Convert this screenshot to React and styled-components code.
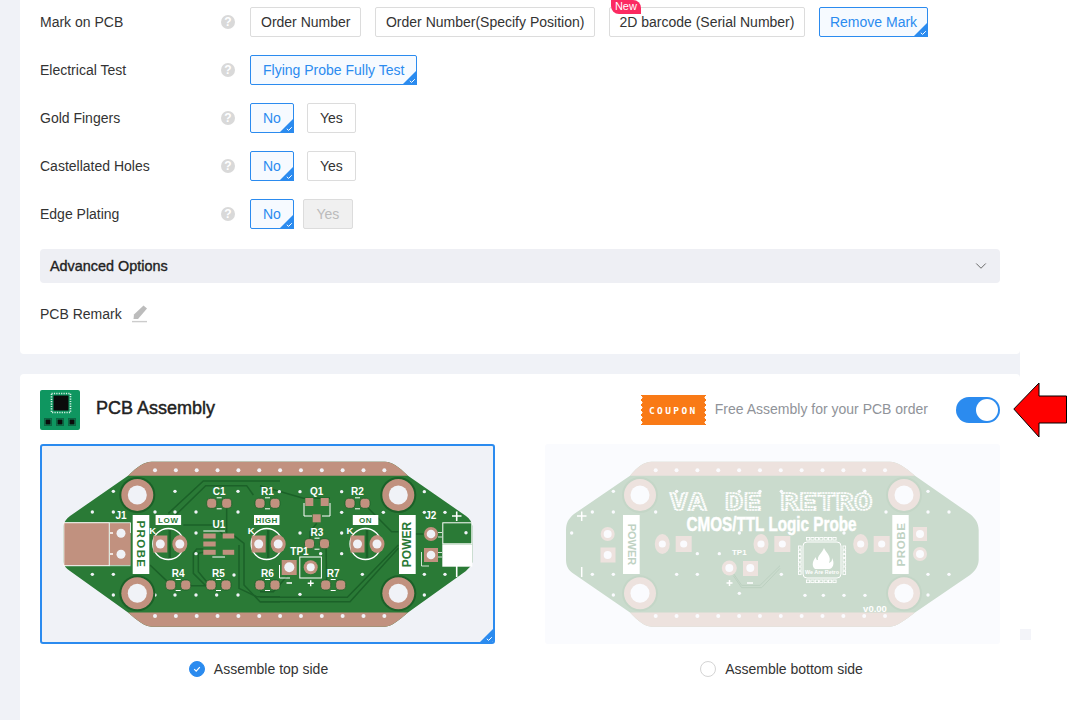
import React from 'react';
import styled, { createGlobalStyle } from 'styled-components';
import { ChevronDown } from 'lucide-react';

const BLUE = '#2b8bef';

const GlobalStyle = createGlobalStyle`
  html, body {
    margin: 0;
    background: #fff;
    overflow: hidden;
  }
  * {
    box-sizing: border-box;
  }
`;

const rows = [
  {
    label: 'Mark on PCB',
    options: [
      { text: 'Order Number', pad: 10 },
      { text: 'Order Number(Specify Position)', pad: 9.5 },
      { text: '2D barcode (Serial Number)', pad: 9.5, isNew: true },
      { text: 'Remove Mark', pad: 10, selected: true },
    ],
  },
  { label: 'Electrical Test', options: [{ text: 'Flying Probe Fully Test', pad: 12, selected: true }] },
  { label: 'Gold Fingers', options: [{ text: 'No', pad: 12, selected: true }, { text: 'Yes', pad: 12, shift: -1 }] },
  { label: 'Castellated Holes', options: [{ text: 'No', pad: 12, selected: true }, { text: 'Yes', pad: 12, shift: -1 }] },
  { label: 'Edge Plating', options: [{ text: 'No', pad: 12, selected: true }, { text: 'Yes', pad: 12.5, shift: -5, disabled: true }] },
];

// Board drawings use page coordinates; the zoomed crops were read at 3x
const zl = (x, y) => [40 + x / 3, 445 + y / 3];
const zr = (x, y) => [260 + x / 3, 445 + y / 3];
const bl = (x, y) => [540 + x / 3, 445 + y / 3];
const br = (x, y) => [770 + x / 3, 445 + y / 3];
const pts = (map, list) => list.map(([x, y]) => map(x, y).join(',')).join(' ');

const TOP = { green: '#2a7a36', dark: '#1b6128', copper: '#c1917f', hole: '#f0f2f7', silk: '#fff' };
const BOTTOM = { green: '#cadbcd', dark: '#bcd0c0', copper: '#ede2de', hole: '#fafbfe', silk: '#fff' };

const topVias = [
  ...[[157, 201], [220, 201], [220, 139], [345, 201], [405, 139], [405, 201], [468, 201], [594, 139], [594, 201],
    [157, 388], [220, 388], [220, 450], [345, 450], [405, 450], [468, 450], [468, 264], [468, 326], [582, 390], [594, 450], [530, 450]]
    .map(([x, y]) => zl(x, y)),
  ...[[58, 140], [120, 140], [245, 140], [245, 202], [370, 202], [120, 264], [245, 264], [245, 326], [182, 326],
    [120, 448], [307, 388], [493, 140], [493, 202], [555, 202], [493, 388], [555, 388], [493, 450]]
    .map(([x, y]) => zr(x, y)),
];

const bottomVias = [
  ...[[220, 139], [157, 201], [220, 201], [347, 201], [95, 264], [157, 388], [220, 388], [220, 450], [410, 388], [472, 388],
    [472, 326], [538, 326], [598, 445], [598, 264], [598, 139], [660, 139], [410, 139]]
    .map(([x, y]) => bl(x, y)),
  ...[[34, 139], [285, 139], [34, 388], [105, 451], [160, 451], [222, 451], [285, 451], [348, 201], [222, 264],
    [474, 139], [474, 201], [537, 201], [474, 388], [537, 388], [474, 450]]
    .map(([x, y]) => br(x, y)),
];

const stripDots = (start, count) => Array.from({ length: count }, (_, i) => start + i * 20.85);

const Dots = ({ list, fill, r = 1.7 }) => list.map(([x, y]) => <circle key={`${x}-${y}`} cx={x} cy={y} r={r} fill={fill} />);

const Mount = ({ x, y, c }) => (
  <g>
    <circle cx={x} cy={y} r={18} fill={c.dark} />
    <circle cx={x} cy={y} r={16} fill={c.copper} />
    <circle cx={x} cy={y} r={9.5} fill={c.hole} />
  </g>
);

const Silk = ({ x, y, size = 10, fill = '#fff', children, ...rest }) => (
  <text x={x} y={y} fontSize={size} fontWeight="700" fontFamily="'Liberation Sans', sans-serif" textAnchor="middle" fill={fill} {...rest}>
    {children}
  </text>
);

const Resistor = ({ x, y, label, c }) => (
  <g>
    <rect x={x - 5} y={y - 5} width={10} height={10} rx={3.5} fill={c.copper} stroke={c.dark} strokeWidth="0.8" />
    <rect x={x + 10} y={y - 5} width={10} height={10} rx={3.5} fill={c.copper} stroke={c.dark} strokeWidth="0.8" />
    <path d={`M${x + 5} ${y - 5.5}h5M${x + 5} ${y + 5.5}h5`} stroke="#fff" strokeWidth="1" />
    <Silk x={x + 7.5} y={y - 8}>{label}</Silk>
  </g>
);

const Led = ({ cx, y, label, labelWidth = 25.5, c }) => (
  <g>
    <rect x={cx - 12.7} y={y - 29} width={labelWidth} height={10} fill="#fff" />
    <Silk x={cx - 12.7 + labelWidth / 2} y={y - 21} size={8} fill={c.green} letterSpacing="0.6">{label}</Silk>
    <Silk x={cx - 15.5} y={y - 10} size={9.5}>K</Silk>
    <circle cx={cx} cy={y} r={15.5} fill="none" stroke="#fff" strokeWidth="1.3" />
    <rect x={cx - 15} y={y - 8.5} width={14} height={17} fill={c.copper} />
    <ellipse cx={cx + 11.5} cy={y} rx={7.5} ry={9} fill={c.copper} />
    <circle cx={cx - 8} cy={y} r={4.5} fill={c.hole} />
    <circle cx={cx + 11.5} cy={y} r={4.5} fill={c.hole} />
    <path d={`M${cx + 1.5} ${y - 14}v28`} stroke={c.dark} strokeWidth="2.5" />
  </g>
);

const TopBoard = () => {
  const c = TOP;
  return (
    <BoardSvg viewBox="42 446 451 196">
      <path
        d="M151.7 461.7H385C392 462 398 466 408 475.7L466 516C470 519 472 522 472.3 526V562C472 565 470 567 466 571L408 612.6C398 621 392 626.4 385 626.7H151.7C144 626.4 138 621 128 612.6L70 571C66 568 64 566 63.3 562V526C64 522 66 519 70 516L128 475.7C138 466 144 462 151.7 461.7Z"
        fill={c.green}
      />
      <path d="M151.7 461.7H385C392 462 398 466 408 475.7H128C138 466 144 462 151.7 461.7Z" fill={c.copper} />
      <path d="M128 612.6H408C398 621 392 626.4 385 626.7H151.7C144 626.4 138 621 128 612.6Z" fill={c.copper} />
      <Dots list={stripDots(155, 12).flatMap((x) => [[x, 470.3], [x, 616]])} fill={c.hole} r={2} />

      <g fill="none" stroke={c.dark} strokeWidth="1.5">
        <polyline points={pts(zl, [[385, 205], [490, 108], [720, 108]])} />
        <polyline points={pts(zl, [[405, 212], [497, 122], [620, 122], [640, 150]])} />
        <polyline points={pts(zl, [[430, 240], [520, 240], [548, 268]])} />
        <polyline points={pts(zl, [[560, 190], [560, 265]])} />
        <polyline points={pts(zl, [[490, 312], [470, 312], [460, 325], [460, 385], [495, 420]])} />
        <polyline points={pts(zl, [[490, 322], [475, 325], [475, 380], [500, 410]])} />
        <polyline points={pts(zl, [[582, 272], [612, 295], [612, 420], [660, 470], [720, 470]])} />
        <polyline points={pts(zl, [[597, 300], [597, 430], [650, 455], [720, 455]])} />
        <polyline points={pts(zl, [[330, 360], [385, 412]])} />
        <polyline points={pts(zl, [[440, 422], [500, 422]])} />
        <polyline points={pts(zr, [[0, 470], [270, 470], [415, 310]])} />
        <polyline points={pts(zr, [[0, 457], [262, 457], [415, 300]])} />
        <polyline points={pts(zr, [[325, 190], [395, 260], [415, 260]])} />
        <polyline points={pts(zr, [[0, 122], [130, 160], [210, 160]])} />
        <polyline points={pts(zr, [[170, 235], [150, 260], [150, 290]])} />
        <polyline points={pts(zr, [[198, 296], [200, 410]])} />
        <polyline points={pts(zr, [[467, 267], [490, 267]])} />
        <polyline points={pts(zr, [[80, 395], [40, 440], [0, 440]])} />
      </g>

      <Dots list={topVias} fill={c.hole} />
      <Mount x={137.3} y={495} c={c} />
      <Mount x={137.3} y={593.3} c={c} />
      <Mount x={398.3} y={495} c={c} />
      <Mount x={398.3} y={593.3} c={c} />

      {/* usb connector */}
      <rect x={110} y={523} width={20.7} height={42} fill={c.copper} />
      <rect x={63.8} y={522.7} width={45.5} height={43} fill={c.copper} stroke="#fff" strokeWidth="1" />
      <path d="M109.5 522.7H130.5V533M109.5 565.7H130.5" fill="none" stroke="#fff" strokeWidth="0.8" />
      <path d="M110 533h3M110 554h3" stroke="#fff" strokeWidth="1.4" />
      <circle cx={121} cy={533.3} r={4.5} fill={c.hole} />
      <circle cx={121} cy={554.3} r={4.5} fill={c.hole} />
      <Silk x={121} y={519}>J1</Silk>

      <rect x={132.7} y={515} width={16.6} height={59} fill="#fff" />
      <Silk x={0} y={0} size={11.5} fill={c.green} letterSpacing="1.4" transform="translate(137 544.5) rotate(90)">PROBE</Silk>

      <Led cx={168.3} y={544} label="LOW" c={c} />
      <Led cx={266.7} y={544} label="HIGH" c={c} />
      <Led cx={365.5} y={544} label="ON" c={c} />

      <Resistor x={211.7} y={503.3} label="C1" c={c} />
      <Resistor x={260} y={503.3} label="R1" c={c} />
      <Resistor x={350} y={503.3} label="R2" c={c} />
      <Resistor x={309.5} y={543.7} label="R3" c={c} />
      <Resistor x={170.7} y={585} label="R4" c={c} />
      <Resistor x={211} y={585} label="R5" c={c} />
      <Resistor x={260} y={585} label="R6" c={c} />
      <Resistor x={325.7} y={585} label="R7" c={c} />

      {/* U1 */}
      <Silk x={219} y={527.5}>U1</Silk>
      <path d="M203.3 531H225M212.3 557H225" stroke="#fff" strokeWidth="1" />
      <g fill={c.copper}>
        <rect x={203.3} y={533.5} width={12.4} height={5} />
        <rect x={203.3} y={541.5} width={12.4} height={5} />
        <rect x={203.3} y={549.8} width={12.4} height={5} />
        <rect x={222.7} y={533.5} width={11.5} height={5} />
        <rect x={222.7} y={549.8} width={11.5} height={5} />
      </g>

      {/* Q1 */}
      <Silk x={316.7} y={495}>Q1</Silk>
      <path d="M304 503V516H312M322 516H330V503" fill="none" stroke="#fff" strokeWidth="1" />
      <g fill={c.copper}>
        <rect x={305.3} y={498} width={8} height={8} />
        <rect x={320.7} y={498} width={8} height={8} />
        <rect x={312.7} y={514.3} width={8} height={8} />
      </g>

      {/* TP1 */}
      <Silk x={299.5} y={555}>TP1</Silk>
      <path d="M279.5 565V578H290" fill="none" stroke="#fff" strokeWidth="1" />
      <rect x={281.7} y={560} width={15} height={15} fill={c.copper} />
      <circle cx={289.3} cy={567.3} r={5} fill={c.hole} />
      <rect x={299.8} y={557} width={21.6} height={21} fill="none" stroke="#fff" strokeWidth="1" />
      <circle cx={310.7} cy={567.3} r={7} fill={c.copper} />
      <circle cx={310.7} cy={567.3} r={4} fill={c.hole} />
      <path d="M286.5 583h5.5M307.7 583.3h6M310.7 580.3v6" stroke="#fff" strokeWidth="1.4" />

      <rect x={399} y={515} width={16.7} height={59} fill="#fff" />
      <Silk x={0} y={0} size={12} fill={c.green} transform="translate(411.3 544.5) rotate(-90)">POWER</Silk>

      {/* J2 */}
      <Silk x={430.7} y={518.5}>J2</Silk>
      <circle cx={431} cy={534} r={7} fill={c.copper} />
      <circle cx={431} cy={534} r={4.3} fill={c.hole} />
      <path d="M421.5 552V566H429" fill="none" stroke="#fff" strokeWidth="0.8" />
      <rect x={424} y={548} width={14} height={14} fill={c.copper} />
      <circle cx={431} cy={555} r={4.3} fill={c.hole} />
      <path d="M438 532.5h4M438 537h4M438 552.5h4M438 557h4" stroke="#fff" strokeWidth="0.8" />
      <rect x={442.8} y={522.8} width={29} height={21} fill={c.green} stroke="#fff" strokeWidth="1" />
      <circle cx={466} cy={532.7} r={1.7} fill={c.hole} />
      <rect x={442.3} y={544.3} width={30} height={22.4} fill="#fff" />
      <path d="M452 516h9.5M456.7 511.5v9.5M456.7 566v11" stroke="#fff" strokeWidth="1.6" />
    </BoardSvg>
  );
};

const BottomBoard = () => {
  const c = BOTTOM;
  const padCols = [[662.3, 'r'], [683.7, 's'], [761, 'r'], [782.3, 's'], [860.7, 'r'], [881.7, 's']];
  return (
    <BoardSvg viewBox="545 444 455 200">
      <path
        d="M651.7 461.7H890C897 462 904 466 915 475.7L970 514C976 519 978.3 523 978.7 530V560C978.3 566 976 570 970 575L915 612.6C904 621 897 626.4 890 626.7H651.7C644 626.4 638 621 630 612.6L574 574C568 570 566.2 566 566 560V530C566.2 523 568 519 574 514L630 475.7C638 466 644 462 651.7 461.7Z"
        fill={c.green}
      />
      <path d="M651.7 461.7H890C897 462 904 466 915 475.7H630C638 466 644 462 651.7 461.7Z" fill={c.copper} />
      <path d="M630 612.6H915C904 621 897 626.4 890 626.7H651.7C644 626.4 638 621 630 612.6Z" fill={c.copper} />
      <Dots list={stripDots(655.7, 12).flatMap((x) => [[x, 470.3], [x, 616]])} fill={c.hole} r={2} />
      <Dots list={bottomVias} fill={c.hole} />

      <polyline points={pts(bl, [[580, 392], [605, 428], [665, 428], [720, 370]])} fill="none" stroke={c.dark} strokeWidth="1" />
      <polyline points={pts(bl, [[580, 385], [605, 421], [660, 421], [720, 362]])} fill="none" stroke={c.dark} strokeWidth="1" />

      <Mount x={640} y={495} c={{ ...c, dark: '#c4d6c7' }} />
      <Mount x={640} y={593.3} c={{ ...c, dark: '#c4d6c7' }} />
      <Mount x={904} y={495} c={{ ...c, dark: '#c4d6c7' }} />
      <Mount x={904} y={593.3} c={{ ...c, dark: '#c4d6c7' }} />

      <Silk
        x={771}
        y={510}
        size={23}
        textLength={203}
        lengthAdjust="spacingAndGlyphs"
        fontFamily="'DejaVu Sans Mono', monospace"
        fill="none"
        stroke="#fff"
        strokeWidth="1.7"
        strokeDasharray="1.6 0.5"
      >
        VA DE RETRO
      </Silk>
      <Silk x={771.5} y={531} size={20} textLength={170} lengthAdjust="spacingAndGlyphs" stroke="#fff" strokeWidth="0.5">CMOS/TTL Logic Probe</Silk>

      <rect x={623} y={515} width={16.7} height={59} fill="#fff" />
      <Silk x={0} y={0} size={11} fill="#bfd2c3" transform="translate(627.5 544.5) rotate(90)">POWER</Silk>
      <rect x={892.3} y={515} width={16.4} height={59} fill="#fff" />
      <Silk x={0} y={0} size={11.5} fill="#bfd2c3" letterSpacing="0.6" transform="translate(904.5 544.5) rotate(-90)">PROBE</Silk>

      {padCols.map(([x, kind]) => (
        <g key={x}>
          {kind === 'r'
            ? <ellipse cx={x} cy={544} rx={7.5} ry={10} fill={c.copper} />
            : <rect x={x - 8} y={536} width={16} height={16} fill={c.copper} />}
          <circle cx={x} cy={544} r={3.6} fill={c.hole} />
        </g>
      ))}

      <circle cx={607.7} cy={534} r={7} fill={c.copper} />
      <circle cx={607.7} cy={534} r={4} fill={c.hole} />
      <rect x={600.5} y={547.5} width={15} height={15} fill={c.copper} />
      <circle cx={607.7} cy={555} r={4} fill={c.hole} />
      <rect x={913} y={527} width={14} height={14} fill={c.copper} />
      <circle cx={920} cy={534} r={4} fill={c.hole} />
      <circle cx={920} cy={554} r={7} fill={c.copper} />
      <circle cx={920} cy={554} r={4} fill={c.hole} />

      <Silk x={739.3} y={555} size={8}>TP1</Silk>
      <circle cx={729.3} cy={568} r={7.5} fill={c.copper} />
      <circle cx={729.3} cy={568} r={4} fill={c.hole} />
      <rect x={743} y={561} width={15} height={15} fill={c.copper} />
      <circle cx={750.3} cy={568} r={4} fill={c.hole} />
      <path d="M726.5 583h6M729.5 580v6M747 583h6M577 516h9.5M581.7 511.5v9.5M581.7 567v10" stroke="#fff" strokeWidth="1.5" />

      {/* retro logo */}
      <rect x={803} y={542} width={38} height={36} rx={4} fill="none" stroke="#fff" strokeWidth="1" />
      <g fill="none" stroke="#fff" strokeWidth="0.9">
        {[0, 1, 2, 3, 4, 5, 6].map((i) => (
          <g key={i}>
            <rect x={806.5 + i * 4.4} y={537.5} width={3.2} height={2.6} />
            <rect x={806.5 + i * 4.4} y={580} width={3.2} height={2.6} />
            <rect x={798.5} y={546 + i * 4.2} width={2.6} height={3.2} />
            <rect x={843} y={546 + i * 4.2} width={2.6} height={3.2} />
          </g>
        ))}
      </g>
      <path d="M824 548C826 553 832 556 829 563C832 562 832 560 832 558C835 563 833 569 829 569H815C811 566 813 560 816 557C816 560 817 560 818 560C817 556 822 553 824 548Z" fill="#fff" />
      <Silk x={822} y={573.5} size={4.5} textLength={34} lengthAdjust="spacingAndGlyphs">We Are Retro</Silk>
      <Silk x={875} y={611.5} size={9.5}>v0.00</Silk>
    </BoardSvg>
  );
};

const ChipIcon = () => (
  <svg width="40" height="40" viewBox="0 0 40 40">
    <rect width="40" height="40" rx="2" fill="#0f9660" />
    <rect x="13.5" y="5.5" width="15" height="15" fill="#0b0b0b" />
    <rect x="11.5" y="3.5" width="19" height="19" fill="none" stroke="#d8efe4" strokeWidth="1.6" strokeDasharray="1.2 1.2" />
    {[8, 20, 32].map((x) => (
      <g key={x}>
        <rect x={x - 2.5} y="29.5" width="5" height="5" fill="#0b0b0b" />
        <rect x={x - 3.5} y="28.5" width="7" height="7" fill="none" stroke="#0b0b0b" strokeWidth="0.7" strokeDasharray="1 1" />
      </g>
    ))}
  </svg>
);

const CornerMark = () => (
  <Corner viewBox="0 0 15 15">
    <path d="M15 0V15H0Z" fill={BLUE} />
    <path d="M7.8 10.8l1.8 1.6 3.2-3.2" fill="none" stroke="#fff" strokeWidth="1" />
  </Corner>
);

const App = () => (
  <>
    <GlobalStyle />
    <Page>
      <OptionsCard>
        {rows.map((row) => (
          <Row key={row.label}>
            <Label>{row.label}</Label>
            <Help>?</Help>
            <Options>
              {row.options.map((opt) => (
                <Option key={opt.text} $selected={opt.selected} $disabled={opt.disabled} $pad={opt.pad} $shift={opt.shift}>
                  {opt.text}
                  {opt.isNew && <NewBadge>New</NewBadge>}
                  {opt.selected && <CornerMark />}
                </Option>
              ))}
            </Options>
          </Row>
        ))}
        <AdvancedBar>
          <AdvancedTitle>Advanced Options</AdvancedTitle>
          <ChevronDown size={18} strokeWidth={1.3} color="#666" />
        </AdvancedBar>
        <RemarkRow>
          PCB Remark
          <svg width="16" height="18" viewBox="0 0 16 18">
            <path d="M11.5 0.5L15 3.5 6 14H1.5L2 9.5Z" fill="#bcbcbc" />
            <path d="M0 16.6H15" stroke="#cccccc" strokeWidth="1.4" />
          </svg>
        </RemarkRow>
      </OptionsCard>

      <AssemblyCard>
        <Header>
          <ChipIcon />
          <Title>PCB Assembly</Title>
          <Coupon>COUPON</Coupon>
          <CouponText>Free Assembly for your PCB order</CouponText>
          <Toggle />
        </Header>
        <Boards>
          <BoardCol>
            <BoardFrame $selected>
              <TopBoard />
              <CornerMark />
            </BoardFrame>
            <Side $pull="right">
              <Radio $checked>
                <svg width="10" height="10" viewBox="0 0 10 10">
                  <path d="M2.2 5.2l2 2 3.6-4" fill="none" stroke="#fff" strokeWidth="1.2" />
                </svg>
              </Radio>
              Assemble top side
            </Side>
          </BoardCol>
          <BoardCol>
            <BoardFrame>
              <BottomBoard />
            </BoardFrame>
            <Side $pull="left">
              <Radio />
              Assemble bottom side
            </Side>
          </BoardCol>
        </Boards>
      </AssemblyCard>

      <ScrollStub />
      <Arrow viewBox="0 0 54 56" width="54" height="56">
        <path d="M0.8 27 L26 1 V14 H53.5 V41 H26 V55 Z" fill="#ff0000" stroke="#000" strokeWidth="1" />
      </Arrow>
    </Page>
  </>
);

export default App;

const Page = styled.div`
  position: relative;
  width: 1020px;
  height: 720px;
  padding-left: 20px;
  background: #f0f2f7;
  font-family: 'Liberation Sans', Arial, sans-serif;
  font-size: 14px;
  color: #333;
`;

const OptionsCard = styled.section`
  height: 354px;
  padding: 7px 20px 0;
  background: #fff;
  border-radius: 0 0 4px 4px;
`;

const Row = styled.div`
  display: flex;
  align-items: center;
  height: 30px;
  margin-bottom: 18px;
`;

const Label = styled.div`
  width: 181px;
`;

const Help = styled.span`
  display: flex;
  align-items: center;
  justify-content: center;
  width: 14px;
  height: 14px;
  margin-right: 15px;
  border-radius: 50%;
  background: #d9d9d9;
  color: #fff;
  font-size: 12px;
  font-weight: 700;
`;

const Options = styled.div`
  display: flex;
  gap: 14px;
`;

const Option = styled.div`
  position: relative;
  display: flex;
  align-items: center;
  height: 30px;
  margin-left: ${(p) => p.$shift || 0}px;
  padding: 0 ${(p) => p.$pad}px;
  border: 1px solid ${(p) => (p.$selected ? BLUE : '#dcdcdc')};
  border-radius: 2px;
  background: ${(p) => (p.$selected ? '#f6faff' : p.$disabled ? '#f0f0f0' : '#fff')};
  color: ${(p) => (p.$selected ? BLUE : p.$disabled ? '#bbb' : '#333')};
`;

const Corner = styled.svg`
  position: absolute;
  right: -1px;
  bottom: -1px;
  width: 15px;
  height: 15px;
`;

const NewBadge = styled.span`
  position: absolute;
  left: 1px;
  top: -8px;
  height: 14px;
  padding: 0 4px;
  border-radius: 0 8px 0 8px;
  background: #fb2a61;
  color: #fff;
  font-size: 11px;
  line-height: 13px;
`;

const AdvancedBar = styled.div`
  display: flex;
  align-items: center;
  justify-content: space-between;
  height: 34px;
  margin-top: 20px;
  padding: 0 10px;
  border-radius: 4px;
  background: #eeeff4;
`;

const AdvancedTitle = styled.span`
  color: #222;
  font-size: 14.4px;
  -webkit-text-stroke: 0.35px #222;
`;

const RemarkRow = styled.div`
  display: flex;
  align-items: center;
  gap: 10px;
  height: 28px;
  margin-top: 17px;
`;

const AssemblyCard = styled.section`
  height: 346px;
  margin-top: 20px;
  padding: 16px 20px 0;
  background: #fff;
  border-radius: 4px 4px 0 0;
`;

const Header = styled.header`
  display: flex;
  align-items: center;
  height: 40px;
`;

const Title = styled.h2`
  margin: 0 auto 3px 16px;
  color: #222;
  font-size: 18px;
  font-weight: 400;
  -webkit-text-stroke: 0.45px #222;
`;

const Coupon = styled.span`
  position: relative;
  display: flex;
  align-items: center;
  justify-content: center;
  width: 65px;
  height: 30px;
  background: #f97a16;
  color: #fff;
  font-family: 'DejaVu Sans Mono', monospace;
  font-size: 9.5px;
  font-weight: 700;
  letter-spacing: 2.4px;

  &::before,
  &::after {
    content: '';
    position: absolute;
    top: 0;
    bottom: 0;
    width: 2px;
    background: radial-gradient(circle at 0 50%, #fff 1.4px, transparent 1.6px) 0 0 / 2px 5px repeat-y;
  }
  &::before {
    left: 0;
  }
  &::after {
    right: 0;
    transform: scaleX(-1);
  }
`;

const CouponText = styled.span`
  margin: 0 0 2px 9px;
  color: #909399;
`;

const Toggle = styled.span`
  position: relative;
  width: 44px;
  height: 26px;
  margin-left: 28px;
  border-radius: 13px;
  background: ${BLUE};

  &::after {
    content: '';
    position: absolute;
    top: 2px;
    right: 2px;
    width: 22px;
    height: 22px;
    border-radius: 50%;
    background: #fff;
  }
`;

const Boards = styled.div`
  display: flex;
  gap: 50px;
  margin-top: 14px;
`;

const BoardCol = styled.div`
  width: 455px;
`;

const BoardFrame = styled.div`
  position: relative;
  height: 200px;
  border-radius: 3px;
  overflow: hidden;
  ${(p) => (p.$selected ? `border: 2px solid ${BLUE}; background: #f0f2f7;` : 'background: #fafbfe;')}
`;

const BoardSvg = styled.svg`
  display: block;
  width: 100%;
  height: 100%;
`;

const Side = styled.div`
  display: flex;
  align-items: center;
  justify-content: center;
  gap: 9px;
  height: 18px;
  margin-top: 16px;
  ${(p) => `padding-${p.$pull}: 18px;`}
  color: #333;
`;

const Radio = styled.span`
  display: flex;
  align-items: center;
  justify-content: center;
  width: 16px;
  height: 16px;
  border-radius: 50%;
  border: 1px solid ${(p) => (p.$checked ? BLUE : '#d4d4d4')};
  background: ${(p) => (p.$checked ? BLUE : '#fff')};
`;

const ScrollStub = styled.div`
  position: absolute;
  left: 1020px;
  top: 629px;
  width: 11px;
  height: 11px;
  background: #f3f4f9;
`;

const Arrow = styled.svg`
  position: absolute;
  left: 1013px;
  top: 382px;
`;
